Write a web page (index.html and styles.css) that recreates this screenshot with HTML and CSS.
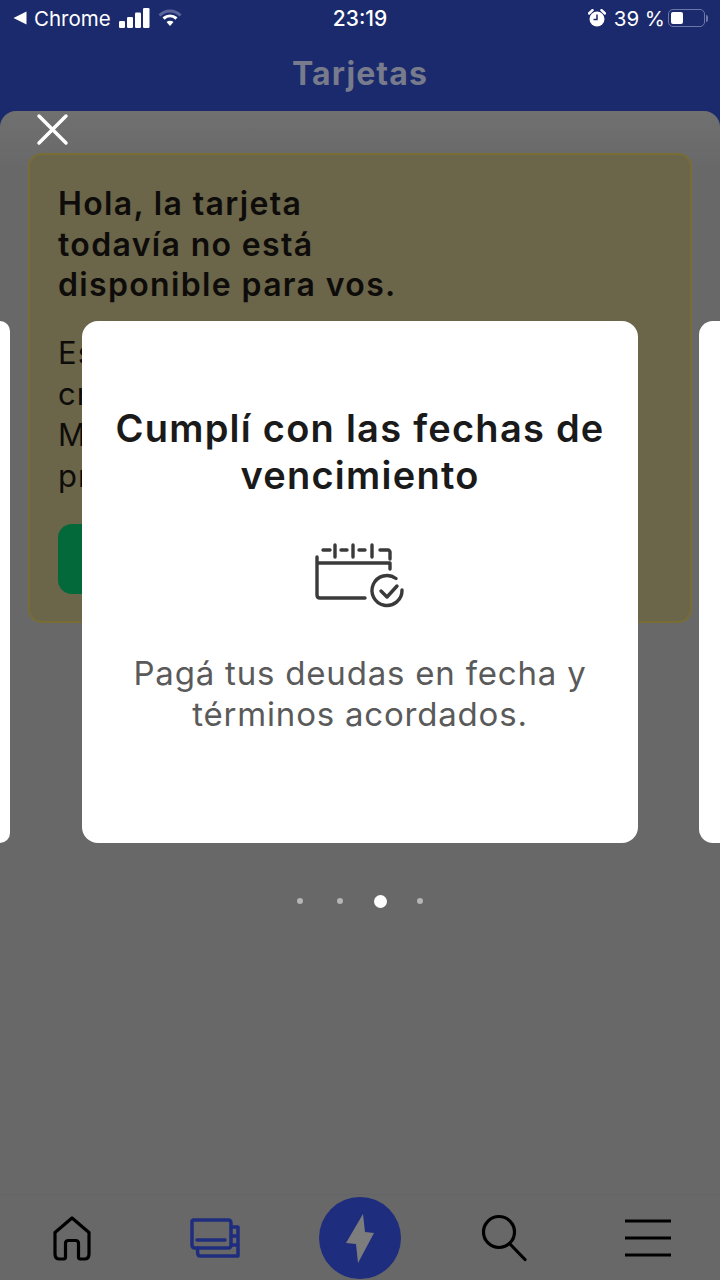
FILE: index.html
```html
<!DOCTYPE html>
<html lang="es">
<head>
<meta charset="utf-8">
<title>Tarjetas</title>
<link rel="stylesheet" href="styles.css">
</head>
<body>
<div class="app">
  <div class="status">
    <div class="status-left">
      <svg class="back-tri" viewBox="0 0 14 14"><path d="M13.5 0.5V13.5L0.5 7Z"/></svg>
      <span>Chrome</span>
      <svg class="signal" viewBox="0 0 31 20"><rect x="0" y="13" width="6" height="7" rx="1.2"/><rect x="8" y="9" width="6" height="11" rx="1.2"/><rect x="16" y="4.500" width="6" height="15.500" rx="1.2"/><rect x="24" y="0" width="6.500" height="20" rx="1.2"/></svg>
      <svg class="wifi" viewBox="0 0 24 18"><path class="wifi-off" d="M1.500 6.500C7.500 0.500 16.500 0.500 22.500 6.500"/><path class="wifi-on" d="M5.500 9.500C9.500 6 14.500 6 18.500 9.500"/><path class="wifi-dot" d="M8.500 13C10.500 11.300 13.500 11.300 15.500 13L12 17Z"/></svg>
    </div>
    <div class="status-time">23:19</div>
    <div class="status-right">
      <svg class="alarm" viewBox="0 0 18 18"><circle cx="9" cy="10" r="7.500" fill="#fff"/><path d="M1 4.500 4.500 1.200M17 4.500 13.500 1.200" stroke="#fff" stroke-width="2.500" stroke-linecap="round"/><path d="M9 5.500V10.500H5.500" fill="none" stroke="#1a2a6c" stroke-width="1.500"/></svg>
      <span>39 %</span>
      <div class="battery"><div class="battery-fill"></div></div>
      <div class="battery-nub"></div>
    </div>
  </div>
  <header class="title-bar">Tarjetas</header>

  <main class="sheet">
    <button class="close" type="button" aria-label="Cerrar">
      <svg viewBox="0 0 33 33"><path d="M3 3 30 30M30 3 3 30"/></svg>
    </button>
    <section class="notice">
      <h2 class="notice-title">Hola, la tarjeta<br>todavía no está<br>disponible para vos.</h2>
      <p class="notice-text">Estamos evaluando tu<br>crédito y tu historial en<br>Mercado Pago, para poder darles tu<br>pronta tarjeta.</p>
      <div class="notice-btn"></div>
    </section>
  </main>

  <nav class="tabs">
    <svg class="tab-home" viewBox="0 0 40 46"><path d="M20 2 37 16.500V38C37 41.500 35.500 43 32.500 43H28.500C27 43 26.500 42.500 26.500 41V27.500C26.500 25.500 25.500 24.500 23.500 24.500H16.500C14.500 24.500 13.500 25.500 13.500 27.500V41C13.500 42.500 13 43 11.500 43H7.500C4.500 43 3 41.500 3 38V16.500Z"/></svg>
    <svg class="tab-cards" viewBox="0 0 50 40"><path d="M3 2H38C40 2 41 3 41 5V27C41 29 40 30 38 30H5C3 30 2 29 2 27V3ZM7 22H35" /><path d="M41 9H48V38H10C8 38 7.500 37 7.500 30M48 18H42M48 27H42"/></svg>
    <div class="tab-bolt">
      <svg viewBox="0 0 28 49"><path d="M17 0 0 29 10 30 12 49 28 19 19 18Z"/></svg>
    </div>
    <svg class="tab-search" viewBox="0 0 46 48"><circle cx="18" cy="18" r="15.500"/><path d="M29 30 44 45.500"/></svg>
    <svg class="tab-menu" viewBox="0 0 46 38"><path d="M0 2H46M0 19H46M0 36H46"/></svg>
  </nav>

  <div class="overlay">
    <div class="carousel">
      <div class="peek peek-prev"></div>
      <article class="slide">
        <h1 class="slide-title">Cumplí con las fechas de<br>vencimiento</h1>
        <svg class="slide-icon" viewBox="0 0 92 66"><path d="M2 14V52C2 54 3 55 5 55H50M2 20H75V26M75 16V9C75 8 74 7 73 7H65M8 7H15M26 7H32M44 7H50M20 2V14M38 2V14M57 2V14"/><path d="M81 35.500A15 15 0 1 0 87 47"/><path d="M66 48 72 54 82 43"/></svg>
        <p class="slide-text">Pagá tus deudas en fecha y<br>términos acordados.</p>
      </article>
      <div class="peek peek-next"></div>
    </div>
    <div class="dots">
      <span class="dot"></span>
      <span class="dot"></span>
      <span class="dot dot-on"></span>
      <span class="dot"></span>
    </div>
  </div>
</div>
</body>
</html>
```

FILE: styles.css
```css
* { box-sizing: border-box; }

html, body {
  margin: 0;
  padding: 0;
  background: #1a2a6c;
}

.app {
  position: relative;
  display: flex;
  flex-direction: column;
  width: 720px;
  height: 1280px;
  overflow: hidden;
  background: #1a2a6c;
  font-family: Inter, "Open Sans", sans-serif;
}

/* Status bar */
.status {
  display: grid;
  grid-template-columns: 1fr auto 1fr;
  align-items: center;
  height: 36px;
  padding: 0 13px;
  color: #fff;
  font-size: 20.500px;
}

.status-left, .status-right {
  display: flex;
  align-items: center;
}

.status-right { justify-content: flex-end; }

.back-tri { width: 14px; height: 14px; fill: #fff; margin-right: 7px; }
.signal { width: 31px; height: 20px; fill: #fff; margin-left: 8px; }

.wifi { width: 24px; height: 18px; margin-left: 8px; fill: none; stroke-width: 3; }
.wifi-off { stroke: #5a659c; }
.wifi-on { stroke: #fff; }
.wifi-dot { fill: #fff; stroke: none; }

.status-time { font-size: 21px; font-weight: 500; }

.alarm { width: 18px; height: 18px; margin-right: 8px; }

.battery {
  width: 37px;
  height: 18px;
  margin-left: 3px;
  padding: 2px;
  border: 1.500px solid #6d77a8;
  border-radius: 5px;
}

.battery-fill { width: 12px; height: 100%; background: #fff; border-radius: 2px; }
.battery-nub { width: 2px; height: 7px; background: #6d77a8; border-radius: 0 2px 2px 0; margin-left: 1px; margin-right: -1px; }

/* Title */
.title-bar {
  height: 75px;
  padding-bottom: 1px;
  display: flex;
  align-items: center;
  justify-content: center;
  color: #777b8c;
  font-size: 32px;
  font-weight: 700;
  letter-spacing: 1.100px;
}

/* Dimmed page behind the slides */
.sheet {
  position: relative;
  flex: 1;
  padding: 42px 28px 0;
  background: linear-gradient(#707070, #686868 60px);
  border-radius: 16px 16px 0 0;
}

.close {
  position: absolute;
  top: 2px;
  left: 36px;
  width: 33px;
  height: 33px;
  padding: 0;
  background: none;
  border: 0;
}

.close svg { display: block; fill: none; stroke: #fff; stroke-width: 3.500; stroke-linecap: round; }

.notice {
  height: 470px;
  padding: 29px 28px 0;
  background: #6b6549;
  border: 2px solid #776d35;
  border-radius: 14px;
  color: #0e0c0a;
}

.notice-title {
  margin: 0;
  font-size: 32px;
  line-height: 40.500px;
  font-weight: 600;
  letter-spacing: 1.350px;
}

.notice-text {
  margin: 26px 0 0;
  font-size: 31px;
  line-height: 41px;
  font-weight: 400;
  letter-spacing: 1.100px;
  white-space: nowrap;
}

.notice-btn {
  width: 200px;
  height: 70px;
  margin-top: 28px;
  background: #04693a;
  border-radius: 14px;
}

/* Bottom tabs */
.tabs {
  position: relative;
  display: flex;
  align-items: center;
  height: 86px;
  flex: none;
  padding: 0 0 0 52px;
  background: #686868;
  border-top: 1px solid #646464;
}

.tabs svg { fill: none; stroke: #000; stroke-width: 3.200; stroke-linecap: round; stroke-linejoin: round; }

.tab-home { width: 40px; height: 46px; margin-top: 2px; stroke-width: 3.500; }
.tabs .tab-cards { width: 50px; height: 40px; margin: 0 0 0 98px; stroke: #1e2d7d; stroke-width: 3.500; }
.tab-bolt {
  display: flex;
  align-items: center;
  justify-content: center;
  width: 82px;
  height: 82px;
  margin-left: 79px;
  margin-top: 1px;
  background: #1e2d7d;
  border-radius: 50%;
}
.tabs .tab-bolt svg { width: 28px; height: 49px; fill: #7d7d7d; stroke: none; }
.tab-search { width: 46px; height: 48px; margin-left: 80px; }
.tab-menu { width: 46px; height: 38px; margin-left: 98px; }

/* Slides laid over the page */
.overlay {
  position: absolute;
  inset: 0;
  padding-top: 321px;
}

.carousel { display: flex; height: 522px; }

.peek { background: #fff; }
.peek-prev { width: 10px; margin-right: 72px; border-radius: 0 14px 14px 0; }
.peek-next { flex: 1; margin-left: 61px; border-radius: 14px 0 0 14px; }

.slide {
  flex: none;
  width: 556px;
  padding-top: 84px;
  background: #fff;
  border-radius: 16px;
  text-align: center;
}

.slide-title {
  margin: 0;
  color: #1a1a1a;
  font-size: 38px;
  line-height: 47px;
  font-weight: 600;
  letter-spacing: 1.250px;
}

.slide-icon {
  display: block;
  width: 92px;
  height: 66px;
  margin: 44px 0 0 233px;
  fill: none;
  stroke: #3a3a3a;
  stroke-width: 3.400;
  stroke-linecap: round;
  stroke-linejoin: round;
}

.slide-text {
  margin: 44px 0 0;
  color: #5a5a5a;
  font-size: 33px;
  line-height: 41px;
  font-weight: 400;
  letter-spacing: 0.800px;
}

.dots {
  display: flex;
  align-items: center;
  justify-content: center;
  gap: 34px;
  height: 14px;
  margin-top: 51px;
}

.dot { width: 6px; height: 6px; border-radius: 50%; background: #b5b5b5; }
.dot-on { width: 13px; height: 13px; margin: 0 -3.500px; background: #fff; }
```
